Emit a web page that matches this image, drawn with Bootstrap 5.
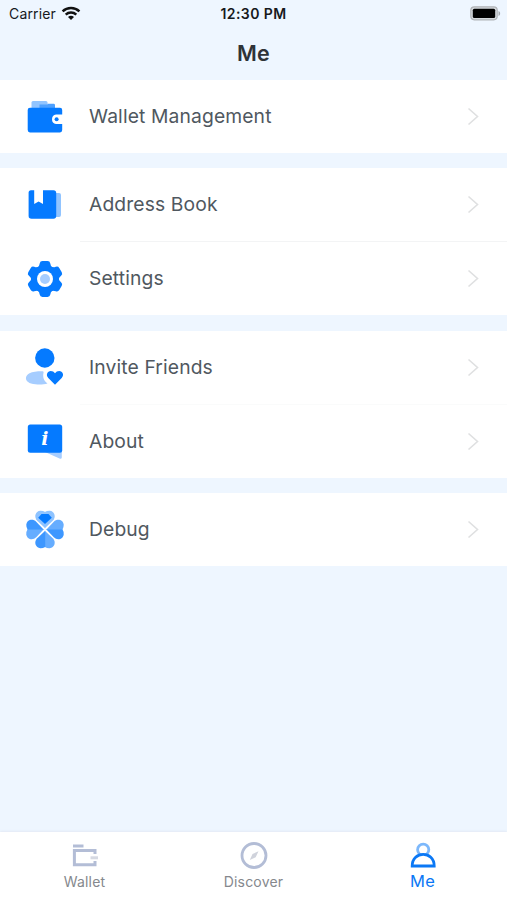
<!DOCTYPE html>
<html lang="en">
<head>
<meta charset="utf-8">
<meta name="viewport" content="width=device-width, initial-scale=1">
<title>Me</title>
<link href="https://cdn.jsdelivr.net/npm/bootstrap@5.3.0/dist/css/bootstrap.min.css" rel="stylesheet">
<style>
body{font-family:Inter,"Liberation Sans",sans-serif;background:#eef6ff;color:#2f3338}
.status{height:27px;font-size:14px;color:#16191d;padding:0 6px 0 9px}
.status>*{flex:1 1 0}
.status .carrier{letter-spacing:.15px}
.status .clock{font-weight:600;letter-spacing:.4px;padding-right:3px}
.title{height:53px;font-size:21.5px;font-weight:600;line-height:52px;letter-spacing:.2px}
.menu-row{height:73px;padding:0 28px 0 25px;font-size:19.3px;letter-spacing:.12px;color:#50585f;text-decoration:none}
.menu-row span{line-height:28px;padding-bottom:2px}
.menu-row svg:first-child{width:40px;height:39px;margin-right:24px}
.rule{height:1px;margin-left:80px;background:#f3f4f5}
.rule-soft{background:#fafbfb}
.group-gap{margin-bottom:15px}
.group-gap-lg{margin-bottom:16px}
.tabs{height:68px;padding-top:10px;box-shadow:0 -1px 2px #e3eaf5}
.tabs a{color:#85888d;font-size:14px;line-height:17px;letter-spacing:.2px;text-decoration:none}
.tabs a.current{color:#0b78f5;font-size:16.5px;line-height:15px}
.tabs svg{width:30px;height:28px}
.tabs span{padding-top:3px}
.tabs .current span{padding-top:3.5px}
</style>
<script src="https://cdn.jsdelivr.net/npm/bootstrap@5.3.0/dist/js/bootstrap.bundle.min.js"></script>
</head>
<body>
<svg width="0" height="0" class="d-none"><defs><path id="chev" d="M1.500 1.500L10.500 9.500L1.500 17.500" fill="none" stroke="#dfe0e1" stroke-width="1.600"/></defs></svg>
<div class="d-flex flex-column vh-100 overflow-hidden">
<header>
  <div class="status d-flex align-items-center">
    <div class="carrier d-flex align-items-center"><span>Carrier</span>
      <svg class="ms-1" width="22" height="15" viewBox="-1 0 22 15" fill="none" stroke="#111" stroke-width="2.500"><path d="M1.600 5.300C6.300.9 13.700.9 18.400 5.300M4.700 8.600C7.700 5.900 12.300 5.900 15.300 8.600"/><path d="M10 14L7 11C8.700 9.400 11.300 9.400 13 11Z" fill="#111" stroke="none"/></svg></div>
    <div class="clock text-center">12:30 PM</div>
    <div class="d-flex justify-content-end"><svg width="31" height="15" viewBox="0 0 31 15"><rect x=".8" y=".8" width="26.400" height="13" rx="3.500" fill="#d5d9dd" stroke="#b0b3b7" stroke-width="1.200"/><rect x="2.800" y="2.700" width="22.400" height="9.200" rx="1.500" fill="#000"/><path d="M28.500 5v5c2.200-.9 2.200-4.100 0-5Z" fill="#a4a8ad"/></svg></div>
  </div>
  <h1 class="title text-center mb-0">Me</h1>
</header>
<main class="flex-grow-1">
  <section class="bg-white group-gap">
    <a href="#" class="menu-row d-flex align-items-center">
      <svg viewBox="25 97 40 39"><rect x="31.500" y="101" width="16" height="12" rx="1.500" fill="#91c4ff"/><path d="M39.500 104.500H47.500V103.800H54Q55 104 55 105V110H39.500Z" fill="#4da0ff"/><path d="M30 107.700H60Q62.200 107.700 62.200 110V114.500H56Q52 115 52 119.300T56 124H62.200V130Q62.200 132.400 60 132.400H30Q27.700 132.400 27.700 130V110Q27.700 107.700 30 107.700Z" fill="#057aff"/><circle cx="56.600" cy="119.300" r="2" fill="#057aff"/></svg>
      <span class="flex-grow-1">Wallet Management</span><svg width="12" height="19"><use href="#chev"/></svg></a>
  </section>
  <section class="bg-white group-gap-lg">
    <a href="#" class="menu-row d-flex align-items-center">
      <svg viewBox="25 185 40 39"><rect x="45" y="193" width="16" height="24" rx="2" fill="#91c4ff"/><path d="M31 190.300H53.500Q56.200 190.500 56.200 193V216Q56.200 218.800 53.500 218.800H31.500Q28.600 218.800 28.600 216V193Q28.600 190.300 31 190.300Z" fill="#057aff"/><path d="M34.200 190H43V204L38.600 201.500L34.200 204Z" fill="#fff"/></svg>
      <span class="flex-grow-1">Address Book</span><svg width="12" height="19"><use href="#chev"/></svg></a>
    <div class="rule"></div>
    <a href="#" class="menu-row d-flex align-items-center">
      <svg viewBox="-20 -20 40 39"><g fill="#057aff"><circle r="14"/><path id="tooth" d="M-7-11.800Q-5.700-12.800-5.300-15.500Q-4.900-17.900-2.500-17.900H2.500Q4.900-17.900 5.300-15.500Q5.700-12.800 7-11.800V11.800Q5.700 12.800 5.300 15.500Q4.900 17.900 2.500 17.900H-2.500Q-4.900 17.900-5.300 15.500Q-5.700 12.800-7 11.800Z"/><use href="#tooth" transform="rotate(60)"/><use href="#tooth" transform="rotate(120)"/></g><circle r="8" fill="#fff"/><circle r="5" fill="#a6cdff"/></svg>
      <span class="flex-grow-1">Settings</span><svg width="12" height="19"><use href="#chev"/></svg></a>
  </section>
  <section class="bg-white group-gap">
    <a href="#" class="menu-row d-flex align-items-center">
      <svg viewBox="25 348 40 39"><path d="M41.500 371.200C44 371.200 43.800 371.500 43.300 374C42.800 378 44 381 47.500 383.400C44 384.500 39 384.600 35.500 384.200C24 383.500 24 376 29.500 373.300C32.500 371.700 37 371.200 41.500 371.200Z" fill="#a6cdff"/><circle cx="44.800" cy="358" r="9.700" fill="#057aff"/><path d="M55 384.700L48.300 378C45.500 375 47.300 371 50.800 371Q53.500 371 55 373.200Q56.500 371 59.200 371C62.700 371 64.500 375 61.700 378Z" fill="#057aff"/></svg>
      <span class="flex-grow-1">Invite Friends</span><svg width="12" height="19"><use href="#chev"/></svg></a>
    <div class="rule rule-soft"></div>
    <a href="#" class="menu-row d-flex align-items-center">
      <svg viewBox="25 422 40 39"><path d="M45 452H61.800V457.500Q61.500 459.500 59.500 458.500Z" fill="#a6cdff"/><rect x="27.800" y="424.500" width="34.400" height="28.300" rx="2.500" fill="#057aff"/><text x="45" y="445.300" text-anchor="middle" font-family="DejaVu Serif,serif" font-weight="bold" font-style="italic" font-size="19" fill="#fff">i</text></svg>
      <span class="flex-grow-1">About</span><svg width="12" height="19"><use href="#chev"/></svg></a>
  </section>
  <section class="bg-white">
    <a href="#" class="menu-row d-flex align-items-center">
      <svg viewBox="-20 -19.500 40 39"><defs><path id="half" d="M.2-1.200L-7.800-8.800C-11.500-12.500-9.500-18.400-4.700-18.700Q-2-18.800 .2-17.400Z"/></defs><g fill="#8ec3ff"><use href="#half"/><use href="#half" transform="scale(-1 1)"/><path d="M0-5.500L-6.800-11.800L-3.500-15.500H3.500L6.800-11.800Z" fill="#057aff"/></g><g transform="rotate(90)"><use href="#half" fill="#66adff"/><use href="#half" transform="scale(-1 1)" fill="#3d97ff"/></g><g transform="rotate(180)"><use href="#half" fill="#66adff"/><use href="#half" transform="scale(-1 1)" fill="#3d97ff"/></g><g transform="rotate(270)"><use href="#half" fill="#66adff"/><use href="#half" transform="scale(-1 1)" fill="#3d97ff"/></g></svg>
      <span class="flex-grow-1">Debug</span><svg width="12" height="19"><use href="#chev"/></svg></a>
  </section>
</main>
<nav class="tabs row g-0 bg-white text-center">
  <a href="#" class="col d-flex flex-column align-items-center"><svg viewBox="70 842 30 28" fill="none" stroke="#b3bdd6" stroke-width="3"><path d="M73 846H83.500"/><path d="M95 854V850.600H74.400V864.800H95V861"/><path d="M90.500 857.800H98" stroke="#d6d9e2"/></svg><span>Wallet</span></a>
  <a href="#" class="col d-flex flex-column align-items-center"><svg viewBox="239 842 30 28"><circle cx="254" cy="855.500" r="12" fill="none" stroke="#b3bdd6" stroke-width="2.800"/><path d="M258.500 851.300L255.700 857.200L249.800 860L252.500 854Z" fill="#d0d3dc"/></svg><span>Discover</span></a>
  <a href="#" class="col current d-flex flex-column align-items-center"><svg viewBox="407.500 842 30 28" fill="none" stroke-width="2.800"><circle cx="422.700" cy="849.700" r="5.600" stroke="#7db8fb"/><path d="M411.700 866C411.700 850.500 433.700 850.500 433.700 866Z" fill="#fff" stroke="#0b78f5"/></svg><span>Me</span></a>
</nav>
</div>
</body>
</html>
